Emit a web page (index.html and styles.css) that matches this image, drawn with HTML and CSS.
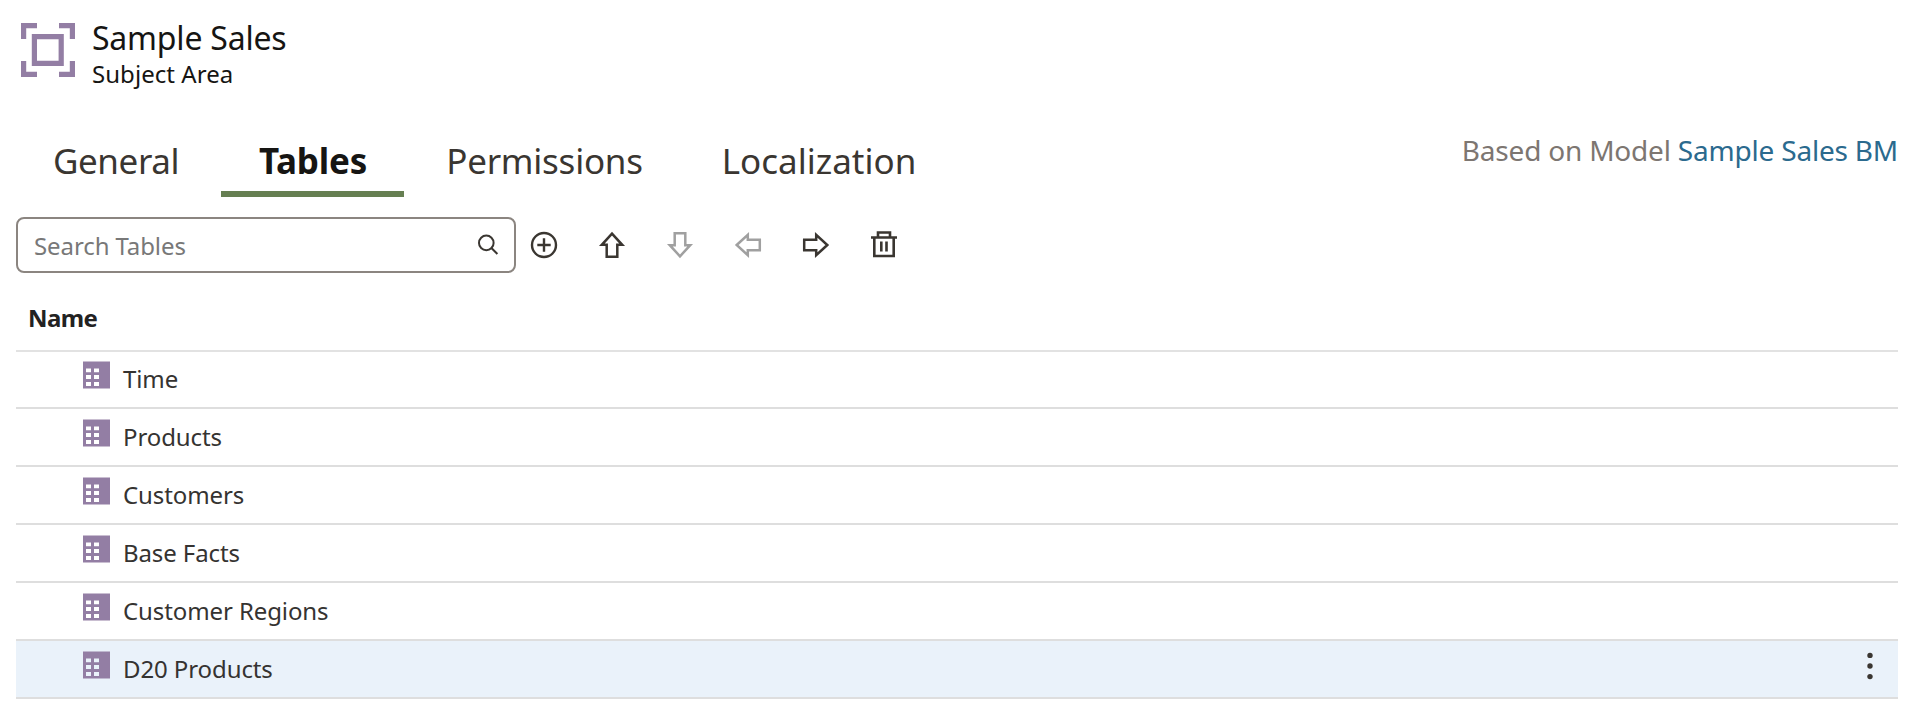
FILE: index.html
```html
<!DOCTYPE html>
<html lang="en">
<head>
<meta charset="utf-8">
<title>Sample Sales</title>
<link rel="stylesheet" href="styles.css">
</head>
<body>
<svg class="defs" aria-hidden="true">
  <symbol id="table" viewBox="0 0 27 28"><path fill="#937ea4" fill-rule="evenodd" d="M0 .5H27V27.5H0ZM3 7.5V11.3H8V7.5ZM11 7.5V11.3H16V7.5ZM3 14V18H8V14ZM11 14V18H16V14ZM3 21V25H8V21ZM11 21V25H16V21Z"/></symbol>
  <symbol id="arrow" viewBox="0 0 28 28"><path fill="none" stroke="currentColor" stroke-width="2.5" d="M14 2.7 24.2 13.8H19.3V25.8H8.7V13.8H3.8Z"/></symbol>
</svg>
<header class="header">
  <svg class="logo" viewBox="0 0 54 54" fill="none" stroke="#937ea4" stroke-width="5.2"><path d="M2.6 16V2.6H16M38 2.6H51.4V16M51.4 38V51.4H38M16 51.4H2.6V38"/><path d="M13.4 13.6H40.2V40.4H13.4Z"/></svg>
  <div class="titles">
    <h1 class="title">Sample Sales</h1>
    <p class="subtitle">Subject Area</p>
  </div>
</header>
<div class="tabbar">
  <nav class="tabs">
    <a class="tab general">General</a>
    <a class="tab active">Tables</a>
    <a class="tab permissions">Permissions</a>
    <a class="tab localization">Localization</a>
  </nav>
  <p class="model">Based on Model <a class="link">Sample Sales BM</a></p>
</div>
<div class="toolbar">
  <label class="search">
    <input class="input" placeholder="Search Tables">
    <svg class="magnifier" viewBox="0 0 22 22" fill="none" stroke="#3a3631" stroke-width="2"><circle cx="9.3" cy="8.9" r="7.3"/><path d="M14.4 14 20.4 20"/></svg>
  </label>
  <div class="actions">
    <svg class="icon" viewBox="0 0 28 28" fill="none" stroke="currentColor" stroke-width="2.4"><circle cx="14" cy="14" r="12"/><path d="M14 7.3V20.7M7.3 14H20.7"/></svg>
    <svg class="icon"><use href="#arrow"/></svg>
    <svg class="icon down off"><use href="#arrow"/></svg>
    <svg class="icon left off"><use href="#arrow"/></svg>
    <svg class="icon right"><use href="#arrow"/></svg>
    <svg class="icon" viewBox="0 0 28 28" fill="none" stroke="currentColor" stroke-width="2.6"><path d="M1 6.5H27M8 6V1.5H20V6M4.3 6V25H23.7V6M11.3 10.5V20.5M16.5 10.5V20.5"/></svg>
  </div>
</div>
<section class="table">
  <div class="head">Name</div>
  <div class="row first"><svg class="glyph"><use href="#table"/></svg><span class="label">Time</span></div>
  <div class="row"><svg class="glyph"><use href="#table"/></svg><span class="label">Products</span></div>
  <div class="row"><svg class="glyph"><use href="#table"/></svg><span class="label">Customers</span></div>
  <div class="row"><svg class="glyph"><use href="#table"/></svg><span class="label">Base Facts</span></div>
  <div class="row"><svg class="glyph"><use href="#table"/></svg><span class="label">Customer Regions</span></div>
  <div class="row selected"><svg class="glyph"><use href="#table"/></svg><span class="label">D20 Products</span><svg class="kebab" viewBox="0 0 6 28" fill="#3a3631"><circle cx="3" cy="3.4" r="2.7"/><circle cx="3" cy="14" r="2.7"/><circle cx="3" cy="24.6" r="2.7"/></svg></div>
</section>
</body>
</html>
```
FILE: styles.css
```css
* { box-sizing: border-box; }
body {
  margin: 0;
  height: 716px;
  overflow: hidden;
  background: #fff;
  color: #353331;
  font-family: "Noto Sans", sans-serif;
  white-space: nowrap;
}
.defs { display: none; }
.header { display: flex; height: 130px; padding: 23px 0 0 21px; }
.logo { width: 54px; height: 54px; }
.titles { margin-left: 17px; color: #161513; }
.title { margin: -5px 0 0; font-size: 32px; font-weight: 400; line-height: 40px; letter-spacing: -0.2px; }
.subtitle { margin: 0; font-size: 24px; line-height: 32px; letter-spacing: 0.05px; }
.tabbar { display: flex; justify-content: space-between; height: 67px; padding-right: 10px; }
.tabs { display: flex; padding-left: 14px; }
.tab { height: 67px; padding-top: 7px; font-size: 35px; line-height: 48px; text-align: center; color: #3a3631; }
.general { width: 207px; padding-right: 3px; letter-spacing: -0.4px; }
.active { width: 183px; border-bottom: 6px solid #667f52; color: #161513; font-weight: 700; letter-spacing: -0.2px; padding-left: 1px; }
.permissions { width: 281px; letter-spacing: -0.25px; }
.localization { width: 268px; }
.model { margin: -1px 0 0; font-size: 28px; line-height: 42px; letter-spacing: -0.2px; color: #7d7671; }
.link { color: #2b6a8e; }
.toolbar { display: flex; height: 76px; padding: 20px 0 0 16px; }
.search { display: flex; width: 500px; height: 56px; border: 2px solid #8b8580; border-radius: 8px; padding: 0 15px 0 16px; align-items: center; }
.input { flex: 1; min-width: 0; border: 0; padding: 0; outline: 0; background: none; font: 24px "Noto Sans", sans-serif; letter-spacing: -0.1px; }
.input::placeholder { color: #787878; opacity: 1; }
.magnifier { width: 22px; height: 22px; }
.actions { display: flex; gap: 40px; padding: 14px 0 0 14px; color: #3a3631; }
.icon { width: 28px; height: 28px; }
.down { transform: rotate(180deg); }
.left { transform: rotate(-90deg); }
.right { transform: rotate(90deg); }
.off { color: #a0a0a0; }
.table { margin: 0 10px 0 16px; font-size: 24px; letter-spacing: -0.1px; }
.head { height: 79px; padding: 27px 0 0 12px; border-bottom: 2px solid #e2e2e2; font-weight: 700; line-height: 36px; letter-spacing: -0.6px; color: #222; }
.row { display: flex; height: 58px; padding-left: 67px; border-bottom: 2px solid #dedede; line-height: 36px; }
.glyph { width: 27px; height: 28px; margin: 10px 13px 0 0; }
.label { padding-top: 10px; }
.first { height: 57px; }
.first .glyph { margin-top: 9px; }
.first .label { padding-top: 9px; }
.selected { background: #eaf2fa; }
.kebab { width: 6px; height: 28px; margin: 11px 25px 0 auto; }
```
